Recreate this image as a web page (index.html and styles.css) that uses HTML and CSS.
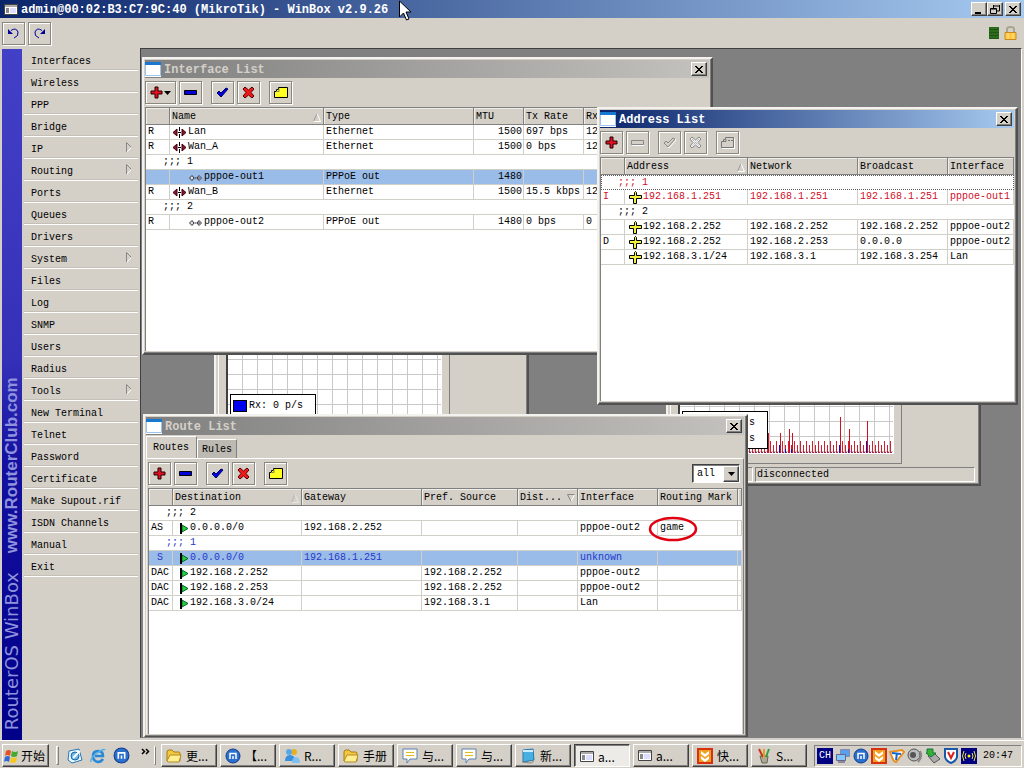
FILE: index.html
```html
<!DOCTYPE html>
<html lang="en">
<head>
<meta charset="utf-8">
<title>WinBox</title>
<link rel="stylesheet" href="styles.css">
</head>
<body>
<svg class="sprites" aria-hidden="true">
  <symbol id="plus" viewBox="0 0 13 13"><path d="M5 1h3v4h4v3H8v4H5V8H1V5h4z" fill="#e01020" stroke="#200"/></symbol>
  <symbol id="minus" viewBox="0 0 13 13"><path d="M.5 4.500h12v4H.5z" fill="#0000d8" stroke="#000"/></symbol>
  <symbol id="check" viewBox="0 0 13 13"><path d="M1 7l2-2 2 2 5-5 2 1-7 8z" fill="#0000e0" stroke="#000060"/></symbol>
  <symbol id="cross" viewBox="0 0 13 13"><path d="M1 3l2-2 3.500 3L10 1l2 2-3 3.500L12 10l-2 2-3.500-3L3 12l-2-2 3-3.500z" fill="#f01818" stroke="#500"/></symbol>
  <symbol id="note" viewBox="0 0 14 13"><path d="M4.500 1.500h9v10H.5v-6h2v-2h2z" fill="#ffff20" stroke="#000"/><path d="M2 5.500h3v-3" fill="none" stroke="#885"/></symbol>
  <symbol id="minus-off" viewBox="0 0 13 13"><path d="M1.500 5.500h11.500v4h-11.500z" fill="none" stroke="#fff"/><path d="M.5 4.500h12v4H.5z" fill="#d4d0c8" stroke="#888"/></symbol>
  <symbol id="check-off" viewBox="0 0 13 13"><path d="M2 8l2-2 2 2 5-5 2 1-7 8z" fill="none" stroke="#fff"/><path d="M1 7l2-2 2 2 5-5 2 1-7 8z" fill="#d4d0c8" stroke="#888"/></symbol>
  <symbol id="cross-off" viewBox="0 0 13 13"><path d="M1 3l2-2 3.500 3L10 1l2 2-3 3.500L12 10l-2 2-3.500-3L3 12l-2-2 3-3.500z" fill="#eee" stroke="#888"/><path d="M3 3l7 7M10 3l-7 7" stroke="#999" stroke-dasharray="1 1"/></symbol>
  <symbol id="note-off" viewBox="0 0 14 13"><path d="M5.500 2.500h8v10h-12v-6" fill="none" stroke="#fff"/><path d="M4.500 1.500h8v10H.5v-6h2v-2h2z" fill="#d4d0c8" stroke="#777"/><path d="M2 5.500h3v-2M7 4.500h2m1 0h2" fill="none" stroke="#777"/></symbol>
  <symbol id="app" viewBox="0 0 16 15"><path d="M0 0h16v15H0z" fill="#fff"/><path d="M.5.5h15v13H.5z" fill="#fff" stroke="#9ac4ee"/><path d="M0 0h16v3H0z" fill="#1878d0"/></symbol>
  <symbol id="close" viewBox="0 0 10 9"><path d="M1 1l7 7M2 1l7 7M8 1L1 8M9 1L2 8" stroke="#000"/></symbol>
  <symbol id="eth" viewBox="0 0 15 11"><path d="M1 5.500L5 2V9zM14 5.500L10 2V9z" fill="#801830" stroke="#401"/><path d="M7.500 0v4M7.500 7v4M6 5.500h3" stroke="#000"/></symbol>
  <symbol id="ppp" viewBox="0 0 15 11"><path d="M1.500 6L4 3.500 6 6 4 8.500zM9 6l2-2.500L13.500 6 11 8.500z" fill="#dde" stroke="#333"/><path d="M6.500 6h2M11 5v2" stroke="#334"/></symbol>
  <symbol id="addr" viewBox="0 0 13 13"><path d="M5.500 4.500V1.500l1-1 1 1v3h5v3h-5v5h-3v-5h-4v-3z" fill="#f4f040" stroke="#000"/></symbol>
  <symbol id="flag" viewBox="0 0 9 11"><path d="M2 2l6 3.500L2 9z" fill="#28d040" stroke="#062"/><path d="M1 0v11" stroke="#000" stroke-width="2"/></symbol>
  <symbol id="sort" viewBox="0 0 8 9"><path d="M.5 8.500L4 .5" stroke="#999" fill="none"/><path d="M4 .5l3.500 8H.5" stroke="#fff" fill="none"/></symbol>
  <symbol id="sortdown" viewBox="0 0 8 8"><path d="M7.500.5L4 7.500" stroke="#fff"/><path d="M7.500.5H.5L4 7.500" stroke="#888" fill="none"/></symbol>
  <symbol id="sub" viewBox="0 0 6 11"><path d="M.5 10.500V.5l5 5" stroke="#888" fill="none"/><path d="M5.500 5.500l-5 5" stroke="#fff"/></symbol>
  <symbol id="panel" viewBox="0 0 14 11"><path d="M.5.5h13v10H.5z" fill="#fff" stroke="#444"/><path d="M1 1h12v2H1z" fill="#aaa"/><path d="M2 4h3v5H2z" fill="#888"/><path d="M6 4h6v5H6z" fill="#ddf"/></symbol>
  <symbol id="folder" viewBox="0 0 16 14"><path d="M1 12V3q0-2 2-2h3l2 2h5q1 0 1 2v7z" fill="#f2c840" stroke="#a87a10"/><path d="M1 12l3-6h11l-2 7H2z" fill="#ffef90" stroke="#b58a20"/></symbol>
  <symbol id="maxthon" viewBox="0 0 16 16"><circle cx="8" cy="8" r="7" fill="#2a70cc" stroke="#123c90"/><path d="M5 11V5.500h6V11M8 8v3" stroke="#fff" stroke-width="1.500" fill="none"/></symbol>
  <symbol id="chat" viewBox="0 0 16 16"><path d="M1 1h14v10H8l-3 4v-4H1z" fill="#fffff0" stroke="#5a80b8"/><path d="M4 4.500h8M4 7.500h8" stroke="#e0b830"/></symbol>
  <symbol id="flashget" viewBox="0 0 16 16"><path d="M0 0h16v16H0z" fill="#d83010"/><path d="M2 2h12v12H2z" fill="#f0a020"/><path d="M4 3l4 3 4-3v3L8 9 4 6zM4 8l4 3 4-3v3l-4 3-4-3z" fill="#fff"/></symbol>
</svg>

<header class="titlebar">
  <svg width="14" height="11"><use href="#panel"/></svg>
  <h1 class="title">admin@00:02:B3:C7:9C:40 (MikroTik) - WinBox v2.9.26</h1>
  <button class="cap" aria-label="Minimize"><svg width="10" height="9"><path d="M1 7h6v2H1z"/></svg></button>
  <button class="cap" aria-label="Restore"><svg width="10" height="9"><path d="M3 1h6M9.500 0v6H7M3.500 0v3M1 4h5M.5 3.500v5h6v-5z" fill="none" stroke="#000"/></svg></button>
  <button class="cap cap-close" aria-label="Close"><svg width="10" height="9"><use href="#close"/></svg></button>
</header>

<div class="toolbar">
  <button class="tool" aria-label="Undo"><svg width="13" height="11"><path d="M4 2.500Q9-1 11 4q1 4-4 6" fill="none" stroke="#009"/><path d="M1 1v5h5z" fill="#009"/></svg></button>
  <button class="tool" aria-label="Redo"><svg width="13" height="11"><path d="M9 2.500Q4-1 2 4q-1 4 4 6" fill="none" stroke="#009"/><path d="M12 1v5H7z" fill="#009"/></svg></button>
  <span class="load"></span>
  <svg width="13" height="15"><path d="M3 6V3q0-2 3.500-2T10 3v3" fill="none" stroke="#a8a490" stroke-width="2"/><path d="M1 6.500h11v7H1z" fill="#ffc840" stroke="#c88a20"/><path d="M4 7v6M9 7v6" stroke="#ffe690"/></svg>
</div>

<main class="main">
  <div class="brand"><p class="brand-text">RouterOS WinBox<b class="brand-site">www.RouterClub.com</b></p></div>
  <nav class="menu">
    <button class="item">Interfaces</button>
    <button class="item">Wireless</button>
    <button class="item">PPP</button>
    <button class="item">Bridge</button>
    <button class="item">IP<svg width="6" height="11"><use href="#sub"/></svg></button>
    <button class="item">Routing<svg width="6" height="11"><use href="#sub"/></svg></button>
    <button class="item">Ports</button>
    <button class="item">Queues</button>
    <button class="item">Drivers</button>
    <button class="item">System<svg width="6" height="11"><use href="#sub"/></svg></button>
    <button class="item">Files</button>
    <button class="item">Log</button>
    <button class="item">SNMP</button>
    <button class="item">Users</button>
    <button class="item">Radius</button>
    <button class="item">Tools<svg width="6" height="11"><use href="#sub"/></svg></button>
    <button class="item">New Terminal</button>
    <button class="item">Telnet</button>
    <button class="item">Password</button>
    <button class="item">Certificate</button>
    <button class="item">Make Supout.rif</button>
    <button class="item">ISDN Channels</button>
    <button class="item">Manual</button>
    <button class="item">Exit</button>
  </nav>

  <div class="desktop">
    <section class="win stats win-stats-a">
      <div class="stats-panel"><div class="graph">
        <div class="legend"><span class="key"><i class="swatch blue"></i>Rx: 0 p/s</span></div>
      </div></div>
      <div class="status"><span class="status-cell status-first"></span><span class="status-cell"></span></div>
    </section>

    <section class="win stats win-stats-b">
      <div class="stats-panel"><div class="graph">
        <svg class="bars" width="212" height="40">
          <path d="M0 34h212" stroke="#d02030" stroke-width="12" stroke-dasharray="1 5"/>
          <path d="M3 36h209" stroke="#d02030" stroke-width="8" stroke-dasharray="1 5"/>
          <path d="M0 39.500h212" stroke="#a02050" stroke-dasharray="2 1"/>
          <path d="M88.500 20v20M100.500 20v20M109.500 16v24M112.500 20v20M160.500 4v36M169.500 16v24M187.500 8v32" stroke="#d01020"/>
          <path d="M99.500 32v8M105.500 36v4M111.500 36v4M159.500 32v8M168.500 36v4M186.500 28v12" stroke="#2010b0"/>
        </svg>
        <div class="legend legend-end"><span class="key">s</span><span class="key">s</span></div>
      </div></div>
      <div class="status"><span class="status-cell status-first"></span><span class="status-cell">disconnected</span></div>
    </section>

    <section class="win win-interfaces">
      <header class="bar"><svg width="16" height="15"><use href="#app"/></svg><h2 class="title">Interface List</h2><button class="cap" aria-label="Close"><svg width="10" height="9"><use href="#close"/></svg></button></header>
      <div class="tools">
        <button class="tool tool-drop" aria-label="Add"><svg width="13" height="13"><use href="#plus"/></svg><svg width="7" height="4"><path d="M0 0h7L3.500 4z"/></svg></button>
        <button class="tool" aria-label="Remove"><svg width="13" height="13"><use href="#minus"/></svg></button>
        <button class="tool apart" aria-label="Enable"><svg width="13" height="13"><use href="#check"/></svg></button>
        <button class="tool" aria-label="Disable"><svg width="13" height="13"><use href="#cross"/></svg></button>
        <button class="tool apart" aria-label="Comment"><svg width="14" height="13"><use href="#note"/></svg></button>
      </div>
      <div class="list"><table class="grid">
        <colgroup><col class="w24"><col class="w154"><col class="w150"><col class="w50"><col class="w60"><col></colgroup>
        <thead><tr><th></th><th><span class="sorted">Name<svg width="8" height="9"><use href="#sort"/></svg></span></th><th>Type</th><th>MTU</th><th>Tx Rate</th><th>Rx</th></tr></thead>
        <tbody>
          <tr><td>R</td><td><span class="named"><svg width="15" height="11"><use href="#eth"/></svg>Lan</span></td><td>Ethernet</td><td class="num">1500</td><td>697 bps</td><td>12</td></tr>
          <tr><td>R</td><td><span class="named"><svg width="15" height="11"><use href="#eth"/></svg>Wan_A</span></td><td>Ethernet</td><td class="num">1500</td><td>0 bps</td><td>12</td></tr>
          <tr><td colspan="6" class="note">;;; 1</td></tr>
          <tr class="selected"><td></td><td><span class="named nested"><svg width="15" height="11"><use href="#ppp"/></svg>pppoe-out1</span></td><td>PPPoE out</td><td class="num">1480</td><td></td><td></td></tr>
          <tr><td>R</td><td><span class="named"><svg width="15" height="11"><use href="#eth"/></svg>Wan_B</span></td><td>Ethernet</td><td class="num">1500</td><td>15.5 kbps</td><td>12</td></tr>
          <tr><td colspan="6" class="note">;;; 2</td></tr>
          <tr><td>R</td><td><span class="named nested"><svg width="15" height="11"><use href="#ppp"/></svg>pppoe-out2</span></td><td>PPPoE out</td><td class="num">1480</td><td>0 bps</td><td>0</td></tr>
        </tbody>
      </table></div>
    </section>

    <section class="win win-routes">
      <header class="bar"><svg width="16" height="15"><use href="#app"/></svg><h2 class="title">Route List</h2><button class="cap" aria-label="Close"><svg width="10" height="9"><use href="#close"/></svg></button></header>
      <div class="tabs"><button class="tab tab-on">Routes</button><button class="tab">Rules</button></div>
      <div class="sheet">
        <div class="tools">
          <button class="tool" aria-label="Add"><svg width="13" height="13"><use href="#plus"/></svg></button>
          <button class="tool" aria-label="Remove"><svg width="13" height="13"><use href="#minus"/></svg></button>
          <button class="tool apart" aria-label="Enable"><svg width="13" height="13"><use href="#check"/></svg></button>
          <button class="tool" aria-label="Disable"><svg width="13" height="13"><use href="#cross"/></svg></button>
          <button class="tool apart" aria-label="Comment"><svg width="14" height="13"><use href="#note"/></svg></button>
          <div class="combo"><select class="combo-box" aria-label="Filter"><option>all</option></select><span class="combo-arrow"><svg width="7" height="4"><path d="M0 0h7L3.500 4z"/></svg></span></div>
        </div>
        <div class="list"><table class="grid">
          <colgroup><col class="w24"><col class="w129"><col class="w120"><col class="w96"><col class="w60"><col class="w80"><col class="w80"><col></colgroup>
          <thead><tr><th></th><th><span class="sorted">Destination<svg width="8" height="9" class="faint"><use href="#sort"/></svg></span></th><th>Gateway</th><th>Pref. Source</th><th><span class="sorted">Dist...<svg width="8" height="8"><use href="#sortdown"/></svg></span></th><th>Interface</th><th>Routing Mark</th><th></th></tr></thead>
          <tbody>
            <tr><td colspan="8" class="note">;;; 2</td></tr>
            <tr><td>AS</td><td><span class="named flagged"><svg width="9" height="11"><use href="#flag"/></svg>0.0.0.0/0</span></td><td>192.168.2.252</td><td></td><td></td><td>pppoe-out2</td><td class="marked">game<svg class="ring" width="50" height="26"><ellipse cx="25" cy="13" rx="23" ry="11" fill="none" stroke="#e00010" stroke-width="2.500"/></svg></td><td></td></tr>
            <tr class="blue-text"><td colspan="8" class="note">;;; 1</td></tr>
            <tr class="selected blue-text"><td>&nbsp;S</td><td><span class="named flagged"><svg width="9" height="11"><use href="#flag"/></svg>0.0.0.0/0</span></td><td>192.168.1.251</td><td></td><td></td><td>unknown</td><td></td><td></td></tr>
            <tr><td>DAC</td><td><span class="named flagged"><svg width="9" height="11"><use href="#flag"/></svg>192.168.2.252</span></td><td></td><td>192.168.2.252</td><td></td><td>pppoe-out2</td><td></td><td></td></tr>
            <tr><td>DAC</td><td><span class="named flagged"><svg width="9" height="11"><use href="#flag"/></svg>192.168.2.253</span></td><td></td><td>192.168.2.252</td><td></td><td>pppoe-out2</td><td></td><td></td></tr>
            <tr><td>DAC</td><td><span class="named flagged"><svg width="9" height="11"><use href="#flag"/></svg>192.168.3.0/24</span></td><td></td><td>192.168.3.1</td><td></td><td>Lan</td><td></td><td></td></tr>
          </tbody>
        </table></div>
      </div>
    </section>

    <section class="win win-addresses">
      <header class="bar bar-active"><svg width="16" height="15"><use href="#app"/></svg><h2 class="title">Address List</h2><button class="cap" aria-label="Close"><svg width="10" height="9"><use href="#close"/></svg></button></header>
      <div class="tools">
        <button class="tool" aria-label="Add"><svg width="13" height="13"><use href="#plus"/></svg></button>
        <button class="tool" aria-label="Remove" disabled><svg width="13" height="13"><use href="#minus-off"/></svg></button>
        <button class="tool apart" aria-label="Enable" disabled><svg width="13" height="13"><use href="#check-off"/></svg></button>
        <button class="tool" aria-label="Disable" disabled><svg width="13" height="13"><use href="#cross-off"/></svg></button>
        <button class="tool apart" aria-label="Comment" disabled><svg width="14" height="13"><use href="#note-off"/></svg></button>
      </div>
      <div class="list"><table class="grid">
        <colgroup><col class="w24"><col class="w123"><col class="w110"><col class="w90"><col></colgroup>
        <thead><tr><th></th><th><span class="sorted">Address<svg width="8" height="9"><use href="#sort"/></svg></span></th><th>Network</th><th>Broadcast</th><th>Interface</th></tr></thead>
        <tbody>
          <tr class="red-text focus"><td colspan="5" class="note">;;; 1</td></tr>
          <tr class="red-text"><td>I</td><td><span class="named addressed"><svg width="13" height="13"><use href="#addr"/></svg>192.168.1.251</span></td><td>192.168.1.251</td><td>192.168.1.251</td><td>pppoe-out1</td></tr>
          <tr><td colspan="5" class="note">;;; 2</td></tr>
          <tr><td></td><td><span class="named addressed"><svg width="13" height="13"><use href="#addr"/></svg>192.168.2.252</span></td><td>192.168.2.252</td><td>192.168.2.252</td><td>pppoe-out2</td></tr>
          <tr><td>D</td><td><span class="named addressed"><svg width="13" height="13"><use href="#addr"/></svg>192.168.2.252</span></td><td>192.168.2.253</td><td>0.0.0.0</td><td>pppoe-out2</td></tr>
          <tr><td></td><td><span class="named addressed"><svg width="13" height="13"><use href="#addr"/></svg>192.168.3.1/24</span></td><td>192.168.3.1</td><td>192.168.3.254</td><td>Lan</td></tr>
        </tbody>
      </table></div>
    </section>
  </div>
</main>

<footer class="taskbar">
  <button class="start"><svg width="16" height="16"><path d="M2 3q3-2 5 0L6 8Q3 6 1 8z" fill="#e85020"/><path d="M8 3q3 2 6 0l-1 5q-3 2-6 0z" fill="#48a830"/><path d="M1 9q3-2 5 0l-1 5q-3-2-5 0z" fill="#3068d8"/><path d="M7 9q3 2 6 0l-1 5q-3 2-6 0z" fill="#f8c820"/></svg>开始</button>
  <i class="grip"></i>
  <div class="quick">
    <svg width="16" height="16"><path d="M2 3l10-2 3 11-10 3-4-3z" fill="#e8f6ff" stroke="#2878b8"/><circle cx="8" cy="8" r="4" fill="#70b8e8" stroke="#1868a8"/><path d="M6 10l7-7" stroke="#fff" stroke-width="2"/></svg>
    <svg width="16" height="16"><path d="M13 11q-2 3-5 3-5-1-5-6t5-5q5 0 5 5H5" fill="none" stroke="#2888d8" stroke-width="2.500"/><path d="M1 14Q0 10 7 5t8-3" fill="none" stroke="#50b0e8" stroke-width="1.500"/></svg>
    <svg width="17" height="17" viewBox="0 0 16 16"><use href="#maxthon"/></svg>
  </div>
  <svg class="more" width="9" height="7"><path d="M1 1l2.500 2.500L1 6M5 1l2.500 2.500L5 6" fill="none" stroke="#000" stroke-width="1.500"/></svg>
  <i class="grip grip-tasks"></i>
  <div class="tasks">
    <button class="task"><svg width="16" height="14"><use href="#folder"/></svg>更...</button>
    <button class="task"><svg width="16" height="16"><use href="#maxthon"/></svg>【...</button>
    <button class="task"><svg width="16" height="16"><circle cx="10" cy="4" r="3" fill="#e8b020"/><circle cx="5" cy="4" r="3" fill="#58a8e8"/><path d="M1 13q0-6 5-6t5 6z" fill="#3890e0"/><path d="M8 15q0-6 4-6t4 6z" fill="#80c0f0"/></svg>R...</button>
    <button class="task"><svg width="16" height="14"><use href="#folder"/></svg>手册</button>
    <button class="task"><svg width="16" height="16"><use href="#chat"/></svg>与...</button>
    <button class="task"><svg width="16" height="16"><use href="#chat"/></svg>与...</button>
    <button class="task"><svg width="16" height="16"><path d="M3 2l10-1 1 11-11 2z" fill="#48b0e0" stroke="#2878a8"/><path d="M3 3h10" stroke="#cef" stroke-width="2"/><path d="M2 14l9 1 3-2" stroke="#888" fill="none"/></svg>新...</button>
    <button class="task task-on"><svg width="14" height="11"><use href="#panel"/></svg>a...</button>
    <button class="task"><svg width="14" height="11"><use href="#panel"/></svg>a...</button>
    <button class="task"><svg width="16" height="16"><use href="#flashget"/></svg>快...</button>
    <button class="task"><svg width="16" height="16"><path d="M4 8h8l-1 7H6z" fill="#b0a890" stroke="#665"/><path d="M3 1l4 8" stroke="#d03020" stroke-width="2"/><path d="M8 1v8" stroke="#e0a020" stroke-width="2"/><path d="M13 1l-3 8" stroke="#389848" stroke-width="2"/></svg>S...</button>
  </div>
  <div class="tray">
    <span class="ime">CH</span>
    <svg width="16" height="16"><path d="M5.500 1.500h9v7h-9z" fill="#58a0f0" stroke="#88a"/><path d="M1.500 6.500h9v6h-9z" fill="#80c8ff" stroke="#668"/><path d="M3 14h7" stroke="#889" stroke-width="2"/></svg>
    <svg width="16" height="16"><use href="#maxthon"/></svg>
    <svg width="16" height="16"><use href="#flashget"/></svg>
    <svg width="16" height="16"><path d="M1 4l12-2 2 2-8 10q-3-1-4-5z" fill="#fff" stroke="#e89020" stroke-width="2"/><path d="M3 5l9 1M8 5L7 12" stroke="#1868d0" stroke-width="2"/></svg>
    <svg width="16" height="16"><circle cx="7" cy="7" r="6" fill="#bbb" stroke="#555"/><circle cx="6" cy="7" r="3" fill="#555"/><path d="M13 3q3 6-2 11" stroke="#888" fill="none" stroke-width="2"/></svg>
    <svg width="16" height="16"><path d="M3 8l6-3 6 6-6 4z" fill="#aaa" stroke="#555"/><path d="M2 1h6v4h3L6 9 1 5h1z" fill="#38b030" stroke="#174"/></svg>
    <svg width="16" height="16"><path d="M2 1h12v8q-1 4-6 6-5-2-6-6z" fill="#fff" stroke="#1858a8" stroke-width="2"/><path d="M5 4l3 6 3-6" stroke="#d82020" stroke-width="2" fill="none"/></svg>
    <svg width="16" height="16"><path d="M0 0h16v16H0z" fill="#000080"/><circle cx="8" cy="8" r="1.500" fill="#ff0"/><path d="M5 5Q3 8 5 11M11 5q2 3 0 6M3 3q-3 5 0 10M13 3q3 5 0 10" stroke="#e8e840" fill="none"/></svg>
    <time class="clock">20:47</time>
  </div>
</footer>
<svg class="pointer" width="13" height="21"><path d="M1.500 1v16l4-4 3 7 2.500-1-3-7h5z" fill="#fff" stroke="#000"/></svg>
</body>
</html>
```
FILE: styles.css
```css
* { box-sizing: border-box; }
body {
  margin: 0; height: 100vh; display: flex; flex-direction: column; overflow: hidden;
  background: #d4d0c8; color: #000;
  font: 10px/14px "Liberation Mono", "Noto Sans CJK SC", monospace;
}
button, select { font: inherit; color: inherit; border-radius: 0; margin: 0; padding: 0; }
svg { flex: none; display: block; }
.sprites { position: absolute; width: 0; height: 0; }
.pointer { position: absolute; left: 398px; top: 0; pointer-events: none; }

.titlebar {
  display: flex; align-items: center; height: 18px; padding: 0 3px 0 4px; flex: none;
  background: linear-gradient(90deg, #0a246a, #a6caf0); color: #fff;
}
.title { flex: 1; margin: 0 0 0 3px; padding-top: 2px; font-size: 12px; line-height: 14px; font-weight: bold; white-space: nowrap; }
.cap {
  display: flex; align-items: center; justify-content: center; width: 16px; height: 14px;
  background: #d4d0c8; border: 1px solid; border-color: #fff #404040 #404040 #fff;
  box-shadow: inset -1px -1px #808080;
}
.cap-close { margin-left: 2px; }

.toolbar { display: flex; align-items: center; gap: 3px; height: 30px; padding: 0 7px 0 2px; flex: none; }
.tool {
  display: flex; align-items: center; justify-content: center; gap: 1px; width: 23px; height: 23px;
  background: #d4d0c8; border: 1px solid #8a877f;
  box-shadow: inset 1px 1px #fff, 1px 1px #fff;
}
.tool-drop { width: 31px; }
.load {
  width: 10px; height: 12px; margin: 0 2px 0 auto;
  background: repeating-linear-gradient(#2c6a1c 0 2px, #1f5812 2px 3px);
}

.main { display: flex; flex: 1; min-height: 0; padding-right: 2px; }
.brand {
  width: 20px; margin: 1px 0 0 2px; padding-bottom: 10px; display: flex; align-items: flex-end; justify-content: center;
  background: linear-gradient(#4340c8, #3530b8 45%, #1410a0 60%, #000088);
}
.brand-text {
  margin: 0; writing-mode: vertical-rl; transform: rotate(180deg); white-space: nowrap;
  font: 18px/20px "DejaVu Sans", sans-serif; color: #8f92dc;
}
.brand-site { margin-top: 19px; font: bold 17px/20px "Liberation Sans", sans-serif; }
.menu { width: 118px; padding: 1px 2px 0; display: flex; flex-direction: column; }
.item {
  display: flex; align-items: center; justify-content: space-between; height: 22px; padding: 4px 6px 0 7px;
  border: 0; border-bottom: 1px solid #fff; background: none; text-align: left; box-shadow: inset 0 -1px #c4c0b8;
}
.item svg { margin-bottom: 4px; }

.desktop {
  position: relative; flex: 1; overflow: hidden; margin-bottom: 2px; background: #808080;
  border: 1px solid; border-color: #404040 #fff #808080 #404040;
}
.win {
  position: absolute; display: flex; flex-direction: column; padding: 1px 2px 2px 1px; background: #d4d0c8;
  border: 2px solid; border-color: #f4f2ee #505050 #505050 #f4f2ee; box-shadow: inset -1px -1px #808080;
}
.win-interfaces { left: 1px; top: 8px; width: 571px; height: 298px; }
.win-addresses { left: 456px; top: 58px; width: 421px; height: 298px; }
.win-routes { left: 2px; top: 365px; width: 605px; height: 324px; }
.win-stats-a { left: 73px; top: 151px; width: 315px; height: 269px; }
.win-stats-b { left: 525px; top: 168px; width: 315px; height: 269px; }

.bar {
  display: flex; align-items: center; height: 18px; padding-right: 2px; flex: none;
  background: linear-gradient(90deg, #808080, #c4c2be); color: #d4d0c8;
}
.bar-active { background: linear-gradient(90deg, #0a246a, #a6caf0); color: #fff; }
.bar .cap { color: #000; }
.tools { display: flex; align-items: center; gap: 3px; padding: 3px 0; flex: none; }
.apart { margin-left: 6px; }
.list { flex: 1; min-height: 0; overflow: hidden; background: #fff; border: solid #808080; border-width: 1px 0 0 1px; }

.grid { width: 100%; table-layout: fixed; border-spacing: 0; }
.w24 { width: 24px; } .w50 { width: 50px; } .w60 { width: 60px; }
.w80 { width: 80px; } .w90 { width: 90px; } .w96 { width: 96px; } .w110 { width: 110px; }
.w120 { width: 120px; } .w123 { width: 123px; } .w129 { width: 129px; } .w150 { width: 150px; } .w154 { width: 154px; }
th, td { padding: 0 1px 0 2px; text-align: left; font-weight: normal; white-space: nowrap; height: 15px; }
th {
  height: 17px; padding-top: 2px; background: #d4d0c8; border: solid #808080; border-width: 0 1px 1px 0;
  box-shadow: inset 1px 1px #f0eee8;
}
td { border: solid #d0d0c8; border-width: 0 1px 1px 0; }
.selected td { background: #9abce8; }
.num { text-align: right; }
td.note { padding-left: 17px; border-right: 0; }
.focus td { border: 1px dotted #606060; line-height: 13px; padding-left: 16px; }
.red-text { color: #d01028; }
.blue-text { color: #2838c8; }
.sorted { display: flex; align-items: center; justify-content: space-between; padding-right: 1px; }
.faint { opacity: .5; }
.named { display: flex; align-items: center; gap: 1px; height: 14px; }
.nested { padding-left: 16px; }
.addressed { padding-left: 2px; }
.flagged { padding-left: 5px; gap: 1px; }
.marked { position: relative; }
.ring { position: absolute; left: -10px; top: -5px; }

.tabs { display: flex; align-items: flex-end; height: 23px; flex: none; }
.tab {
  height: 19px; padding: 2px 4px 0; background: #bcb9b2;
  border: solid; border-width: 1px 1px 0; border-color: #fff #808080 #fff #fff;
}
.tab-on { height: 22px; padding: 0 7px 0 6px; background: #d4d0c8; }
.sheet {
  flex: 1; min-height: 0; display: flex; flex-direction: column; padding: 0 1px 0 1px;
  border: solid; border-width: 1px 1px 0; border-color: #fff #808080 #fff #f0eee8;
}
.combo {
  display: flex; width: 48px; height: 19px; margin: 0 2px 0 auto; background: #fff;
  border: 1px solid; border-color: #404040 #fff #fff #404040;
  box-shadow: inset 1px 1px #808080; padding: 1px 0 0 1px;
}
.combo-box { appearance: none; flex: 1; min-width: 0; border: 0; background: none; padding: 0 3px; outline: 0; }
.combo-arrow {
  display: flex; align-items: center; justify-content: center; width: 16px; background: #d4d0c8; pointer-events: none;
  border: 1px solid; border-color: #fff #404040 #404040 #fff; box-shadow: inset -1px -1px #808080;
}

.stats { padding: 2px; }
.stats-panel {
  flex: 1; min-height: 0; width: 232px; padding: 8px 7px 9px 7px; display: flex;
  border: 1px solid; border-color: #fff #808080 #808080 #fff;
}
.graph {
  flex: 1; position: relative; display: flex; align-items: flex-end; background-color: #fff;
  border: solid; border-width: 1px 1px 1px 2px; border-color: #404040 #fff #fff #404040;
  background-image: linear-gradient(90deg, #c8c8c8 1px, transparent 1px), linear-gradient(0deg, #c8c8c8 1px, transparent 1px);
  background-size: 15px 15px; background-position: 14px 0, 0 calc(100% - 1px);
}
.legend {
  position: absolute; left: 2px; bottom: 4px; width: 86px; height: 38px; padding: 4px 2px;
  display: flex; flex-direction: column; gap: 2px; background: #fff; border: 1px solid #000;
}
.legend-end { align-items: flex-end; padding-right: 12px; }
.key { display: flex; align-items: center; gap: 2px; white-space: nowrap; }
.swatch { width: 14px; height: 12px; border: 1px solid #000; }
.blue { background: #0000f0; }
.status { display: flex; gap: 2px; height: 18px; padding: 3px 2px 0 2px; flex: none; }
.status-cell { flex: 1; padding-left: 1px; border: 1px solid; border-color: #808080 #fff #fff #808080; }
.status-first { flex: 0 0 81px; }

.taskbar {
  display: flex; align-items: center; height: 28px; padding: 2px 2px 0; flex: none;
  border-top: 1px solid #fff; font: 12px/16px "Noto Sans CJK SC", sans-serif;
}
.start, .task {
  display: flex; align-items: center; height: 23px; background: #d4d0c8; white-space: nowrap; flex: none;
  border: 1px solid; border-color: #fff #404040 #404040 #fff; box-shadow: inset -1px -1px #808080;
}
.start { width: 47px; padding-left: 1px; gap: 1px; }
.grip { width: 3px; height: 19px; margin: 0 8px 0 7px; border: 1px solid; border-color: #fff #808080 #808080 #fff; }
.grip-tasks { margin: 0 5px 0 auto; }
.quick { display: flex; align-items: center; gap: 7px; }
.more { margin: 0 4px 8px 11px; }
.tasks { display: flex; gap: 3px; }
.task { width: 56px; padding-left: 4px; gap: 4px; overflow: hidden; }
.task-on { background: #ecebe7; border-color: #404040 #fff #fff #404040; box-shadow: inset 1px 1px #808080; padding: 2px 0 0 5px; }
.tray {
  display: flex; align-items: center; gap: 2px; width: 208px; height: 22px; margin-left: 7px; padding: 0 8px 0 2px; flex: none;
  border: 1px solid; border-color: #808080 #fff #fff #808080;
}
.ime { width: 16px; height: 16px; background: #000080; color: #fff; font: 10px/16px "Liberation Mono", monospace; text-align: center; }
.clock { margin-left: auto; font: 10px/16px "Liberation Mono", monospace; }
```
